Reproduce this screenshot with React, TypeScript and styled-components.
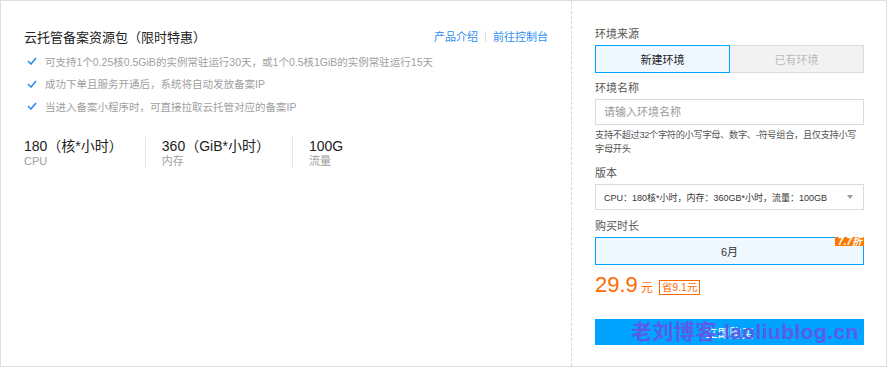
import styled, { createGlobalStyle } from 'styled-components'

const GlobalStyle = createGlobalStyle`
  html, body {
    margin: 0;
    padding: 0;
    background: #fff;
  }
  body {
    font-family: 'Liberation Sans', 'Noto Sans CJK SC', sans-serif;
    color: #333;
  }
`

const Frame = styled.div`
  box-sizing: border-box;
  width: 887px;
  height: 367px;
  border: 1px solid #dedede;
  display: flex;
  background: #fff;
`

const Intro = styled.div`
  box-sizing: border-box;
  width: 570px;
  padding: 26px 23px 0 23px;
`

const Header = styled.div`
  display: flex;
  justify-content: space-between;
  align-items: center;
  height: 18px;
`

const Title = styled.h2`
  margin: 0;
  font-size: 13px;
  font-weight: normal;
  color: #222;
`

const Links = styled.div`
  display: flex;
  align-items: center;
  gap: 7px;
  font-size: 11px;
`

const Link = styled.a`
  color: #2e8ef0;
  text-decoration: none;
`

const Divider = styled.span`
  width: 1px;
  height: 11px;
  background: #ddd;
`

const Features = styled.ul`
  list-style: none;
  margin: 5px 0 0 0;
  padding: 0;
`

const Feature = styled.li`
  display: flex;
  align-items: center;
  gap: 8px;
  height: 22.5px;
  padding-left: 3px;
  font-size: 10.5px;
  color: #a0a0a0;
`

const Stats = styled.div`
  display: flex;
  margin-top: 19px;
`

const Stat = styled.div<{ $last?: boolean }>`
  display: flex;
  flex-direction: column;
  justify-content: center;
  height: 32px;
  padding-right: ${(p) => (p.$last ? 0 : 22)}px;
  margin-right: ${(p) => (p.$last ? 0 : 16)}px;
  border-right: ${(p) => (p.$last ? 'none' : '1px solid #e6e6e6')};
`

const StatValue = styled.div`
  font-size: 14px;
  line-height: 18px;
  color: #222;
`

const StatLabel = styled.div`
  font-size: 11px;
  line-height: 13px;
  color: #a0a0a0;
`

const Order = styled.div`
  box-sizing: border-box;
  flex: 1;
  border-left: 1px dashed #d6d6d6;
  padding: 25px 22px 0 23px;
  display: flex;
  flex-direction: column;
`

const FieldLabel = styled.div<{ $top?: number }>`
  font-size: 11px;
  line-height: 16px;
  color: #555;
  margin-top: ${(p) => p.$top ?? 0}px;
  margin-bottom: 3px;
`

const Segmented = styled.div`
  display: flex;
  height: 28px;
`

const Segment = styled.div<{ $active?: boolean }>`
  box-sizing: border-box;
  flex: 1;
  display: flex;
  align-items: center;
  justify-content: center;
  font-size: 11px;
  border: 1px solid ${(p) => (p.$active ? '#00a4ff' : '#dcdcdc')};
  border-left-width: ${(p) => (p.$active ? 1 : 0)}px;
  background: ${(p) => (p.$active ? '#f0f8ff' : '#f2f2f2')};
  color: ${(p) => (p.$active ? '#222' : '#bbb')};
`

const TextInput = styled.input`
  box-sizing: border-box;
  height: 26px;
  width: 100%;
  margin: 0;
  border: 1px solid #dcdcdc;
  padding: 0 8px;
  font-family: inherit;
  font-size: 11px;
  color: #333;
  outline: none;
  &::placeholder {
    color: #9a9a9a;
  }
`

const Hint = styled.div`
  margin-top: 3px;
  font-size: 9.2px;
  letter-spacing: -0.3px;
  line-height: 14px;
  color: #555;
`

const Select = styled.div`
  box-sizing: border-box;
  height: 26px;
  border: 1px solid #dcdcdc;
  display: flex;
  align-items: center;
  justify-content: space-between;
  padding: 0 8px 0 8px;
  font-size: 9px;
  color: #333;
`

const Caret = styled.span`
  width: 0;
  height: 0;
  border-left: 3.5px solid transparent;
  border-right: 3.5px solid transparent;
  border-top: 4px solid #999;
  margin-right: 2px;
`

const Duration = styled.div`
  position: relative;
  box-sizing: border-box;
  height: 28px;
  border: 1px solid #00a4ff;
  background: #f0f8ff;
  display: flex;
  align-items: center;
  justify-content: center;
  font-size: 11px;
  color: #333;
`

const Discount = styled.span`
  position: absolute;
  top: -1px;
  right: -1px;
  height: 9px;
  padding: 0 2px 0 3px;
  background: #ff7800;
  color: #fff;
  font-size: 10px;
  font-weight: bold;
  font-style: italic;
  line-height: 9px;
  overflow: hidden;
`

const PriceRow = styled.div`
  display: flex;
  align-items: baseline;
  margin-top: 7px;
  color: #ff6a00;
`

const Price = styled.span`
  font-size: 22px;
  line-height: 26px;
`

const Unit = styled.span`
  font-size: 12px;
  margin-left: 3px;
`

const Save = styled.span`
  margin-left: 6px;
  border: 1px solid #ff6a00;
  font-size: 10.5px;
  line-height: 13px;
  padding: 0 2px;
  position: relative;
  top: -1px;
`

const BuyButton = styled.button`
  position: relative;
  box-sizing: border-box;
  margin-top: 21px;
  height: 26px;
  width: 100%;
  border: none;
  background: #00a4ff;
  color: #fff;
  font-family: inherit;
  font-size: 12px;
  padding: 0;
`

const Watermark = styled.span`
  position: absolute;
  left: 36px;
  top: 1px;
  font-size: 21px;
  line-height: 24px;
  font-weight: bold;
  letter-spacing: 0.4px;
  color: #5b5ce6;
  white-space: nowrap;
  pointer-events: none;
`

const CheckIcon = () => (
  <svg width="10" height="8" viewBox="0 0 10 8">
    <polyline points="1,4 4,7 9,1" fill="none" stroke="#2d8cf0" strokeWidth="1.6" />
  </svg>
)

const features = [
  '可支持1个0.25核0.5GiB的实例常驻运行30天，或1个0.5核1GiB的实例常驻运行15天',
  '成功下单且服务开通后，系统将自动发放备案IP',
  '当进入备案小程序时，可直接拉取云托管对应的备案IP',
]

const stats = [
  { value: '180（核*小时）', label: 'CPU' },
  { value: '360（GiB*小时）', label: '内存' },
  { value: '100G', label: '流量' },
]

export default function App() {
  return (
    <>
      <GlobalStyle />
      <Frame>
        <Intro>
          <Header>
            <Title>云托管备案资源包（限时特惠）</Title>
            <Links>
              <Link href="#">产品介绍</Link>
              <Divider />
              <Link href="#">前往控制台</Link>
            </Links>
          </Header>
          <Features>
            {features.map((f) => (
              <Feature key={f}>
                <CheckIcon />
                {f}
              </Feature>
            ))}
          </Features>
          <Stats>
            {stats.map((s, i) => (
              <Stat key={s.label} $last={i === stats.length - 1}>
                <StatValue>{s.value}</StatValue>
                <StatLabel>{s.label}</StatLabel>
              </Stat>
            ))}
          </Stats>
        </Intro>
        <Order>
          <FieldLabel>环境来源</FieldLabel>
          <Segmented>
            <Segment $active>新建环境</Segment>
            <Segment>已有环境</Segment>
          </Segmented>
          <FieldLabel $top={7}>环境名称</FieldLabel>
          <TextInput placeholder="请输入环境名称" />
          <Hint>支持不超过32个字符的小写字母、数字、-符号组合，且仅支持小写字母开头</Hint>
          <FieldLabel $top={9}>版本</FieldLabel>
          <Select>
            <span>CPU：180核*小时，内存：360GB*小时，流量：100GB</span>
            <Caret />
          </Select>
          <FieldLabel $top={8}>购买时长</FieldLabel>
          <Duration>
            6月
            <Discount>7.7折</Discount>
          </Duration>
          <PriceRow>
            <Price>29.9</Price>
            <Unit>元</Unit>
            <Save>省9.1元</Save>
          </PriceRow>
          <BuyButton>
            立即购买
            <Watermark>老刘博客-laoliublog.cn</Watermark>
          </BuyButton>
        </Order>
      </Frame>
    </>
  )
}
